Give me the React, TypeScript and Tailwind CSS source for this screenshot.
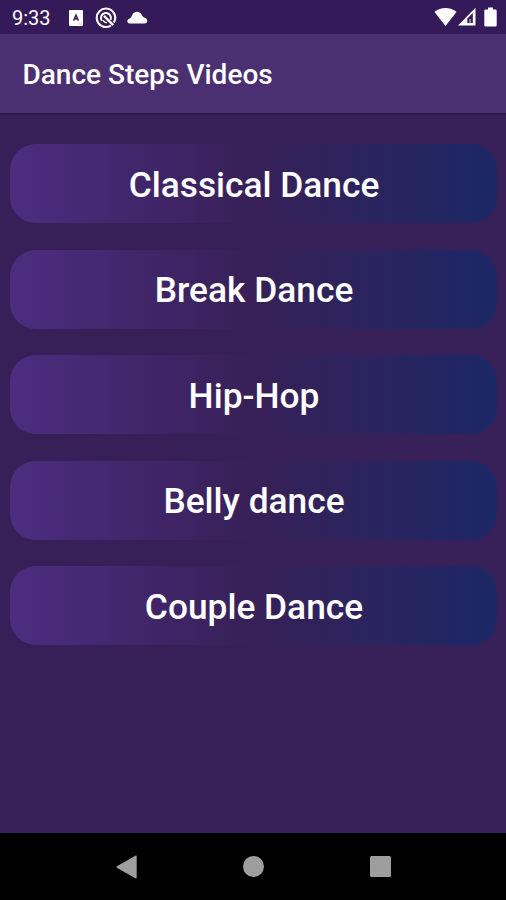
const categories = [
  'Classical Dance',
  'Break Dance',
  'Hip-Hop',
  'Belly dance',
  'Couple Dance',
];

function StatusBar() {
  return (
    <div className="flex h-[34px] items-center justify-between bg-[#341a58] pl-3 pr-[9px] text-white">
      <div className="flex items-center">
        <span className="w-[56px] pt-0.5 text-[20px] leading-none">9:33</span>
        <svg className="ml-px mt-0.5" width="14" height="16" viewBox="0 0 14 16">
          <rect width="14" height="16" rx="1" fill="currentColor" />
          <path d="M4.6 10.6 L7 5 L9.4 10.6 M5.5 8.8 H8.5" fill="none" stroke="#341a58" strokeWidth="1.4" />
          <path d="M9 14 H12.5 V12" fill="none" stroke="#d8d2e2" strokeWidth="1" />
        </svg>
        <svg className="ml-3 mt-0.5" width="22" height="22" viewBox="0 0 22 22" fill="none" stroke="currentColor">
          <path d="M15.8 18.6 A9.2 9.2 0 1 1 18.8 15.6" strokeWidth="2.1" />
          <path d="M7 14 A5 5 0 1 1 15.6 12.8" strokeWidth="2" />
          <path d="M9 8.8 L18.2 18.2" strokeWidth="2.4" />
          <path d="M8 13.4 Q9.4 15.6 12 15.8" strokeWidth="1.6" />
        </svg>
        <svg className="ml-2.5 mt-px" width="21" height="13" viewBox="0 0 21 13" fill="currentColor">
          <path d="M2.6 12.4 C-0.4 12 -0.3 8.4 2.4 7.8 C4 7.2 4.4 5.6 5.4 3.6 C7.4 0 12.4 -0.2 14.6 3.4 C15.6 5.4 16.4 6 17.8 6.8 C21.4 8.2 20.8 12.4 17.6 12.4 Z" />
        </svg>
      </div>

      <div className="flex items-center">
        <svg width="23" height="20" viewBox="0 0 23 20" fill="currentColor">
          <path d="M0.5 5 C6.5 -0.3 16.5 -0.3 22.5 5 L11.5 19 Z" />
        </svg>
        <svg width="20" height="20" viewBox="0 0 20 20">
          <path d="M1 18.5 L18.5 0.8 V18.5 Z" fill="currentColor" />
          <path d="M10.3 16 V11.6 L15.8 6 V16 Z" fill="#341a58" />
          <path d="M12.3 16.2 V12 H13.8 V16.2 Z" fill="#a99bc0" />
        </svg>
        <svg className="ml-[7px]" width="13" height="20" viewBox="0 0 13 20" fill="currentColor">
          <path d="M4 0.5 H9 V2.5 H11.5 Q12.7 2.5 12.7 3.8 V18.2 Q12.7 19.5 11.5 19.5 H1.5 Q0.3 19.5 0.3 18.2 V3.8 Q0.3 2.5 1.5 2.5 H4 Z" />
        </svg>
      </div>
    </div>
  );
}

function NavBar() {
  return (
    <div className="flex h-[67px] items-center justify-center gap-[106px] bg-black pl-px text-[#9e9e9e]">
      <svg width="21" height="24" viewBox="0 0 21 24" fill="currentColor">
        <path d="M0.9 11.3 L19.3 0.7 Q20.7 0.2 20.7 1.5 V22.5 Q20.7 23.8 19.3 23.2 L0.9 12.7 Q-0.2 12 0.9 11.3 Z" />
      </svg>
      <div className="size-[21px] rounded-full bg-[#9e9e9e]" />
      <div className="size-[21px] rounded-[1.5px] bg-[#9e9e9e]" />
    </div>
  );
}

export default function App() {
  return (
    <div className="flex h-[900px] w-[506px] flex-col bg-[#372057] font-['Roboto',sans-serif] text-white">
      <StatusBar />

      <header className="flex h-[79px] items-center bg-[#4a3070] pl-[22.5px] pt-[3px] shadow-[0_1px_1px_rgba(30,10,60,0.5)]">
        <h1 className="text-[28px] font-medium leading-none">Dance Steps Videos</h1>
      </header>

      <main className="flex flex-1 flex-col gap-[26.5px] pl-2.5 pr-[9px] pt-[31px]">
        {categories.map((name) => (
          <button
            key={name}
            className="flex h-[79px] shrink-0 items-center justify-center rounded-[26px] bg-[linear-gradient(90deg,#4c2d80_0%,#372057_50%,#1c2866_100%)] pt-1 pl-px text-[35.3px] font-medium leading-none"
          >
            {name}
          </button>
        ))}
      </main>

      <NavBar />
    </div>
  );
}
